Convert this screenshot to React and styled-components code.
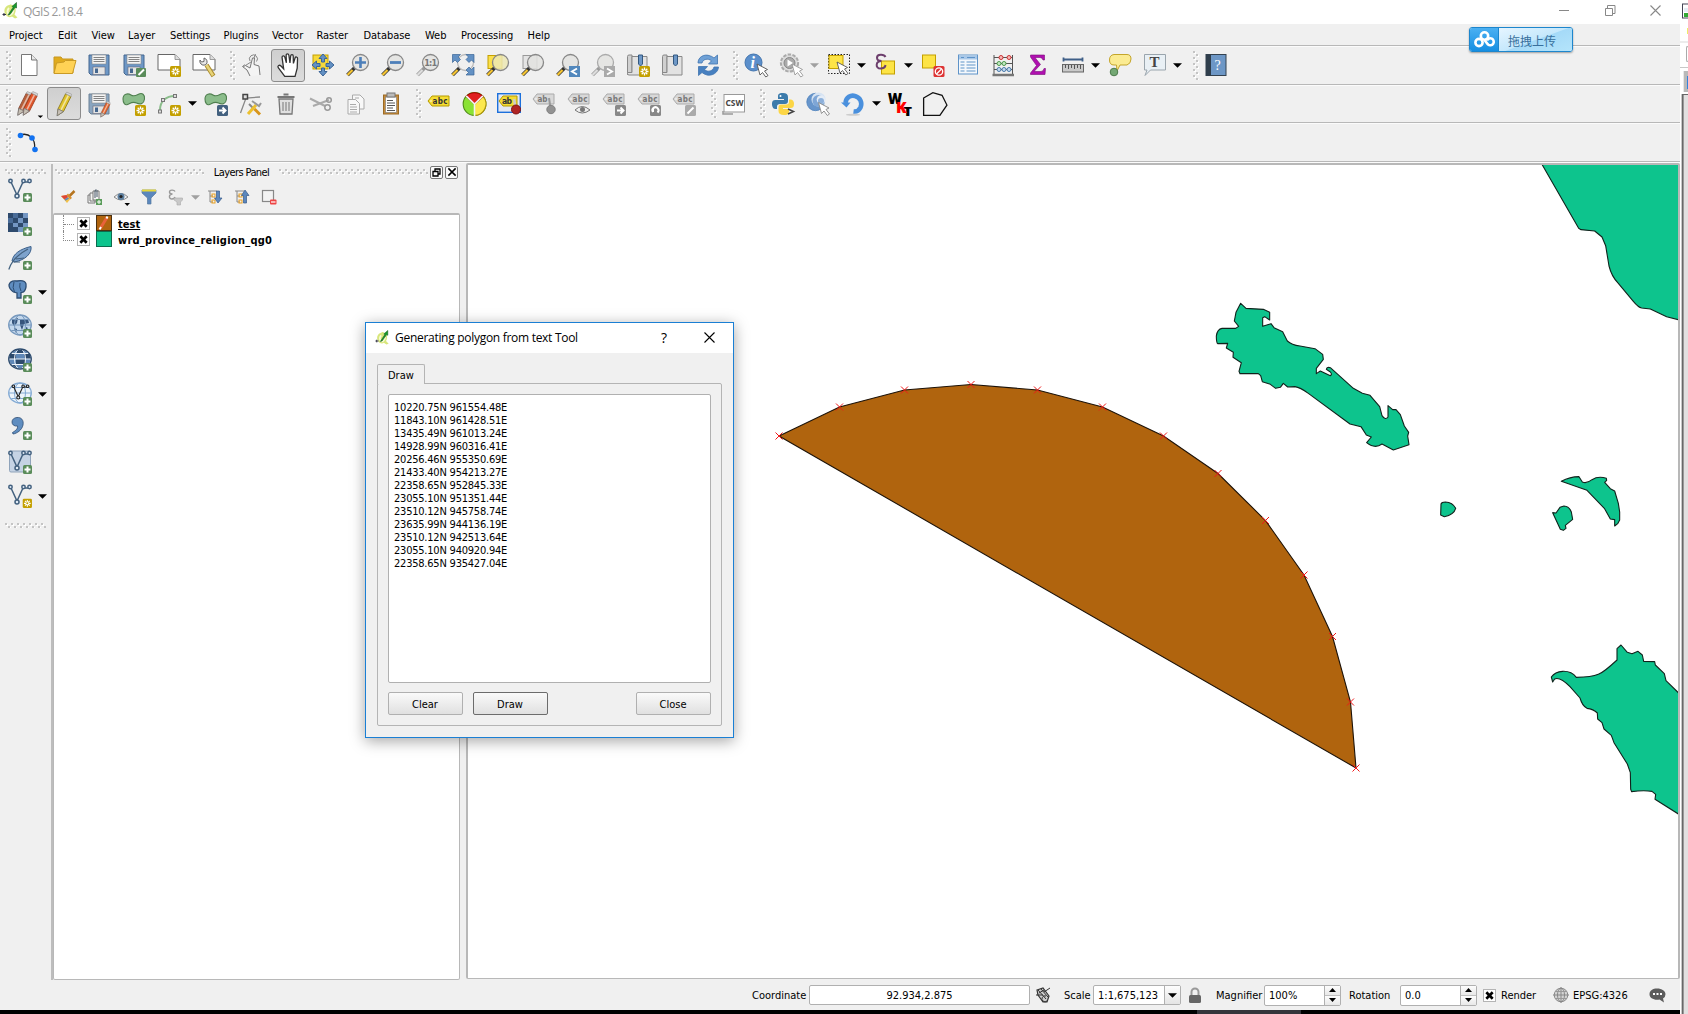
import React from "react";
import styled, { createGlobalStyle, css } from "styled-components";

const GlobalStyle = createGlobalStyle`
  * { box-sizing: border-box; }
  html, body { margin: 0; padding: 0; overflow: hidden; }
  body {
    font-family: "DejaVu Sans Condensed", "DejaVu Sans", "Noto Sans CJK SC", sans-serif;
    font-stretch: condensed;
    font-size: 11px;
    color: #000;
    background: #fff;
  }
  svg { display: block; flex: none; overflow: visible; }
`;

/* ---------- shared ---------- */

const dots = css`
  background-image:
    conic-gradient(at 2px 2px, transparent 75%, #c4c4c4 0),
    conic-gradient(at 2px 2px, transparent 75%, #c4c4c4 0),
    conic-gradient(at 2px 2px, transparent 75%, #fff 0),
    conic-gradient(at 2px 2px, transparent 75%, #fff 0);
  background-size: 6px 6px;
  background-position: 0 0, 3px 3px, 1px 1px, 4px 4px;
`;

const Screen = styled.div`
  position: relative;
  display: flex;
  width: 1688px;
  height: 1014px;
`;

const Main = styled.div`
  display: flex;
  flex-direction: column;
  width: 1680px;
  height: 1014px;
  background: #f0f0f0;
`;

/* ---------- title and menu ---------- */

const TitleBar = styled.header`
  display: flex;
  align-items: center;
  height: 24px;
  padding: 0 11px 2px 2px;
  background: #fff;
  color: #999;
  font-family: "Open Sans", "Noto Sans", sans-serif;
  font-stretch: normal;
  font-size: 12px;
  letter-spacing: -0.5px;
`;
const TitleText = styled.span`
  flex: 1;
  margin-left: 4px;
  padding-top: 2px;
`;
const WindowControls = styled.div`
  display: flex;
  align-items: center;
  gap: 34.500px;
  padding-right: 8px;
  margin-top: -1px;
`;
const MenuBar = styled.nav`
  display: flex;
  align-items: center;
  height: 21px;
  padding: 3px 0 0 9px;
`;
const MenuItem = styled.span`
  width: ${(p) => p.$w}px;
  white-space: nowrap;
  letter-spacing: -0.05px;
`;

/* ---------- toolbars ---------- */

const ToolBar = styled.div`
  display: flex;
  align-items: center;
  height: 39px;
  border-top: 1px solid #b8b8b8;
  box-shadow: inset 0 1px 0 #fbfbfb;
  padding-top: 1px;
`;
const Handle = styled.div`
  display: flex;
  flex: none;
  justify-content: flex-end;
  width: ${(p) => p.$w}px;
  &::after {
    content: "";
    width: 6px;
    height: 29px;
    ${dots}
  }
`;
const ToolButton = styled.div`
  display: flex;
  flex: none;
  align-items: center;
  justify-content: center;
  width: 34px;
  height: 33px;
  margin: 0 0.5px;
  border: 1px solid ${(p) => (p.$on ? "#8c8c8c" : "transparent")};
  border-radius: 3px;
  background: ${(p) => (p.$on ? "linear-gradient(#cfcfcf, #dcdcdc)" : "none")};
`;
const ArrowSlot = styled.div`
  display: flex;
  flex: none;
  align-items: center;
  justify-content: center;
  width: 12px;
`;
const Body = styled.div`
  display: flex;
  height: 819px;
  border-top: 1px solid #b8b8b8;
  box-shadow: inset 0 1px 0 #fbfbfb;
`;
const SideBar = styled.aside`
  display: flex;
  flex-direction: column;
  width: 53px;
  margin-top: 2px;
  padding: 5px 0 0 3px;
  border-right: 2px solid #bdbdbd;
`;
const SideDots = styled.div`
  width: 41px;
  height: 5px;
  margin: ${(p) => p.$m};
  ${dots}
`;
const SideRow = styled.div`
  display: flex;
  align-items: center;
  height: 34px;
`;
const SideIcon = styled.div`
  display: flex;
  justify-content: center;
  width: 33px;
`;

/* ---------- layers panel ---------- */

const Panel = styled.section`
  display: flex;
  flex-direction: column;
  width: 407px;
  padding-top: 3px;
`;
const PanelTitle = styled.div`
  display: flex;
  align-items: center;
  height: 14px;
  padding: 0 2px 0 2px;
`;
const PanelDots = styled.div`
  flex: none;
  width: ${(p) => p.$w}px;
  height: 6px;
  ${dots}
`;
const PanelName = styled.span`
  flex: 1;
  padding-top: 1px;
  text-align: center;
  letter-spacing: -0.6px;
  white-space: nowrap;
`;
const MiniButton = styled.div`
  display: flex;
  align-items: center;
  justify-content: center;
  width: 13px;
  height: 13px;
  margin-left: 2px;
  border: 1px solid #777;
  border-radius: 2px;
  background: #fafafa;
`;
const PanelTools = styled.div`
  display: flex;
  align-items: center;
  height: 34px;
  padding: 2px 0 0 1px;
`;
const PanelTool = styled.div`
  display: flex;
  justify-content: center;
  width: 27px;
`;
const Tree = styled.div`
  display: flex;
  flex-direction: column;
  height: 767px;
  padding-left: 9px;
  border: 1px solid #b8b8b8;
  border-width: 2px 1px 1px 1px;
  border-radius: 2px;
  background: #fff;
`;
const TreeRow = styled.div`
  display: flex;
  align-items: center;
  height: 16px;
  font-weight: bold;
  white-space: nowrap;
`;
const Branch = styled.div`
  width: 10px;
  height: 16px;
  margin-right: 4px;
  &::before {
    content: "";
    display: block;
    width: 10px;
    height: 9px;
    border-left: 1px dotted #888;
    border-bottom: 1px dotted #888;
  }
  &[data-open="true"] {
    border-left: 1px dotted #888;
  }
  &[data-open="true"]::before {
    border-left: 0;
  }
`;
const Swatch = styled.div`
  display: flex;
  align-items: center;
  justify-content: center;
  width: 16px;
  height: 16px;
  margin: 0 6px 0 6px;
  border: 1px solid ${(p) => p.$b};
  background: ${(p) => p.$c};
`;
const LayerName = styled.span`
  padding-top: 2px;
  text-decoration: ${(p) => (p.$active ? "underline" : "none")};
  letter-spacing: ${(p) => p.$ls}px;
`;
const Check = styled.div`
  display: flex;
  flex: none;
  align-items: center;
  justify-content: center;
  width: 13px;
  height: 13px;
  border: 1px solid #b4b4b4;
  background: #fff;
`;

/* ---------- map ---------- */

const MapFrame = styled.div`
  width: 1214px;
  height: 816px;
  margin: 1px 0 0 6px;
  border: 1px solid #b8b8b8;
  border-width: 2px 2px 1px 2px;
  border-radius: 2px;
  background: #fff;
  overflow: hidden;
`;

/* ---------- status bar ---------- */

const StatusBar = styled.footer`
  display: flex;
  align-items: center;
  height: 29px;
  padding: 1px 0 0 752px;
  white-space: nowrap;
`;
const Label = styled.span`
  width: ${(p) => p.$w}px;
  padding: 1px 0 0 ${(p) => p.$pl || 0}px;
`;
const Field = styled.div`
  display: flex;
  align-items: center;
  justify-content: ${(p) => (p.$center ? "center" : "flex-start")};
  width: ${(p) => p.$w}px;
  height: ${(p) => p.$h || 20}px;
  padding-left: ${(p) => p.$pl || 0}px;
  border: 1px solid #b0b0b0;
  border-radius: 2px;
  background: #fff;
`;
const FieldValue = styled.span`
  flex: ${(p) => (p.$grow ? 1 : "none")};
  padding-top: 1px;
`;
const ComboArrow = styled.div`
  display: flex;
  align-items: center;
  justify-content: center;
  width: 16px;
  height: 18px;
  border-left: 1px solid #b0b0b0;
  background: linear-gradient(#fdfdfd, #e4e4e4);
`;
const Spinner = styled.div`
  display: flex;
  flex-direction: column;
  width: 16px;
  height: 19px;
  border-left: 1px solid #b0b0b0;
`;
const SpinHalf = styled.div`
  display: flex;
  flex: 1;
  align-items: center;
  justify-content: center;
  background: linear-gradient(#fdfdfd, #e8e8e8);
  & + & { border-top: 1px solid #c0c0c0; }
`;
const StatusIcon = styled.div`
  display: flex;
  justify-content: center;
  width: ${(p) => p.$w}px;
`;
const TaskStrip = styled.div`
  display: flex;
  height: 5px;
  border-top: 1px solid #f0f0f0;
  background: #000;
`;
const TaskActive = styled.div`
  width: 104px;
  margin-left: 1197px;
  background: #35353b;
`;

/* ---------- neighbouring window edge ---------- */

const Edge = styled.div`
  display: flex;
  flex-direction: column;
  width: 8px;
  background: #fff;
  overflow: hidden;
`;
const EdgeTop = styled.div`
  height: 41px;
  padding: 3px 0 0 2px;
`;
const EdgeBar = styled.div`
  height: 27px;
  padding: 3px 0 0 6px;
  border-top: 2px solid #ececec;
  border-bottom: 1px solid #c8c8c8;
`;
const EdgeBox = styled.div`
  height: 16px;
  border: 1px solid #aaa;
  border-right: 0;
  border-radius: 2px 0 0 2px;
`;
const EdgeTab = styled.div`
  height: 21px;
  margin: 3px 0 2px 3px;
  padding: 5px 0 0 3px;
  border-left: 1px solid #e8e8e8;
  background: #b9b9b9;
`;
const EdgeBlue = styled.div`
  height: 13px;
  background: #3384dd;
`;
const EdgeBody = styled.div`
  flex: 1;
  margin-left: 1px;
  border-left: 1px solid #c8c8c8;
  box-shadow: inset 1px 0 0 #686868, inset 0 1px 0 #686868, inset 2px 0 0 #999;
  background: #e2e0e0;
`;

/* ---------- floating upload badge ---------- */

const Upload = styled.div`
  position: absolute;
  left: 1469px;
  top: 27px;
  display: flex;
  width: 104px;
  height: 25px;
  border: 1px solid #1d86cd;
  border-radius: 3px;
  box-shadow: 0 1px 2px rgba(0, 0, 0, 0.35);
  overflow: hidden;
`;
const UploadLogo = styled.div`
  display: flex;
  align-items: center;
  justify-content: center;
  width: 29px;
  border-right: 1px solid #1d86cd;
  background: linear-gradient(#4bb0f2, #168fe2);
`;
const UploadText = styled.div`
  flex: 1;
  padding: 4px 0 0 9px;
  color: #376f9c;
  font-family: "Noto Sans CJK SC", sans-serif;
  font-size: 12px;
  line-height: 17px;
  background: linear-gradient(160deg, #e6f5ff 0%, #c5e8fc 50%, #a5daf8 52%, #b4e4fb 100%);
`;

/* ---------- dialog ---------- */

const Dialog = styled.div`
  position: absolute;
  left: 365px;
  top: 322px;
  display: flex;
  flex-direction: column;
  width: 369px;
  height: 416px;
  border: 1px solid #1a7fd4;
  background: #f0f0f0;
  box-shadow: 0 3px 14px rgba(0, 0, 0, 0.36);
`;
const DialogTitle = styled.div`
  display: flex;
  align-items: center;
  height: 30px;
  padding: 0 18px 1px 9px;
  background: #fff;
  font-family: "Open Sans", "Noto Sans", sans-serif;
  font-stretch: normal;
  font-size: 12px;
`;
const DialogName = styled.span`
  flex: 1;
  margin-left: 5px;
  letter-spacing: -0.29px;
  white-space: nowrap;
`;
const HelpMark = styled.span`
  width: 43px;
  font-size: 14px;
`;
const TabRow = styled.div`
  display: flex;
  padding: 11px 0 0 11px;
`;
const Tab = styled.div`
  width: 48px;
  height: 20px;
  padding: 4px 0 0 10px;
  margin-bottom: -1px;
  border: 1px solid #b4b4b4;
  border-bottom: 0;
  border-radius: 2px 2px 0 0;
  background: #f0f0f0;
  z-index: 1;
`;
const TabPage = styled.div`
  display: flex;
  flex-direction: column;
  width: 345px;
  height: 343px;
  margin-left: 11px;
  padding: 10px;
  border: 1px solid #b4b4b4;
  border-radius: 2px;
`;
const TextArea = styled.div`
  height: 289px;
  padding: 6px 5px;
  border: 1px solid #b0b0b0;
  border-radius: 2px;
  background: #fff;
`;
const TextLine = styled.div`
  height: 13px;
  line-height: 13px;
  letter-spacing: -0.22px;
  white-space: pre;
`;
const ButtonRow = styled.div`
  display: flex;
  gap: 10px;
  margin-top: 9px;
`;
const PushButton = styled.div`
  width: 75px;
  height: 23px;
  margin-left: ${(p) => (p.$right ? "auto" : 0)};
  padding-right: 1px;
  border: 1px solid ${(p) => (p.$default ? "#6c6c6c" : "#b0b0b0")};
  border-radius: 2px;
  background: linear-gradient(#fafafa, #e0e0e0);
  line-height: 23px;
  text-align: center;
`;

/* ---------- icons ---------- */

const Svg = ({ s = 24, w, h, vb, children }) => (
  <svg width={w || s} height={h || s} viewBox={vb || "0 0 24 24"} fill="none">{children}</svg>
);
const Down = ({ c = "#000" }) => (
  <svg width="9" height="5" viewBox="0 0 10 5"><path d="M0 0H10L5 5Z" fill={c} /></svg>
);
const Star = () => (
  <g><rect x="13" y="13" width="11" height="11" rx="1.5" fill="#c4a000" />
    <path d="M18.500 14.500v8M14.500 18.500h8M15.700 15.700l5.600 5.600M21.300 15.700l-5.600 5.600" stroke="#fff" strokeWidth="1.300" /><circle cx="18.500" cy="18.500" r="1.200" fill="#c4a000" /></g>
);
const Plus = () => (
  <g><rect x="15" y="15" width="9" height="9" rx="1.500" fill="#5a8c5a" /><path d="M19.500 16.500v6M16.500 19.500h6" stroke="#fff" strokeWidth="2" /></g>
);
const Cursor = ({ x = 0, y = 0, c = "#555" }) => (
  <path transform={`translate(${x} ${y})`} d="M0 0L3 11L5.500 8.500L8.800 13L11 11.500L7.500 7L10.500 5.500Z" fill="#fff" stroke={c} strokeWidth=".9" />
);
const Floppy = ({ pale, children }) => (
  <Svg><path d="M2 2H22V22H4L2 20Z" fill={pale ? "#8aa5c0" : "#6d97c6"} stroke={pale ? "#6c8296" : "#45678f"} /><rect x="5" y="2" width="14" height="9" fill="#f4f4f4" stroke="#888" strokeWidth=".6" /><path d="M6.500 4.500h11M6.500 6.500h11M6.500 8.500h11" stroke="#777" strokeWidth=".9" /><rect x="6" y="14" width="12" height="7.500" fill="#e4e4e4" stroke="#667" strokeWidth=".6" /><rect x="8" y="15.500" width="3" height="4.500" fill="#45678f" />{children}</Svg>
);
const Lens = ({ c = "#888", fill = "#e3e3e1", gold = true, before, children }) => (
  <Svg>{before}<path d="M1.500 22L8.500 15" stroke={gold ? "#333" : "#999"} strokeWidth="3.800" /><path d="M1.500 22L6.500 17" stroke={gold ? "#f5c431" : "#ddd"} strokeWidth="2.300" /><circle cx="14.500" cy="9.500" r="8" fill={fill} fillOpacity=".85" stroke={c} strokeWidth="1.300" />{children}</Svg>
);
const Tag = ({ on, cut, children }) => (
  <Svg><g transform={on ? "translate(0 2)" : undefined}><path d="M1 7L5 2H22V12H5Z" fill={on ? "#f5dc33" : "#d8d8d8"} stroke={on ? "#b59b00" : "#aaa"} /><circle cx="4" cy="7" r=".8" fill="#fff" />
    <text x="5.500" y="10.300" fontSize="8" fontWeight="bold" fill={on ? "#333" : "#777"} fontFamily="DejaVu Sans, sans-serif" textLength={cut ? 10 : 15}>{cut ? "ab" : "abc"}</text></g>{children}</Svg>
);
const Cloud = ({ children }) => (
  <Svg><path d="M1 7C1 1.500 6 1 9 3S14 3.500 17 2S23 2.500 22.500 7S18.500 13 14.500 11S8 11.500 5.500 12.500S1 11 1 7Z" fill="#8bbd8b" stroke="#4f7f4f" strokeWidth="1.100" />{children}</Svg>
);
const Nodes = ({ c = "#43617f" }) => (
  <g stroke={c} strokeWidth="1.500" fill="#dfeaf5"><path d="M3 4L9 17L15 4H21" fill="none" /><circle cx="2.500" cy="3" r="1.700" /><circle cx="9" cy="18" r="2" /><circle cx="15.500" cy="3" r="1.700" /><circle cx="21.500" cy="3" r="1.700" /></g>
);
const Book = ({ children }) => (
  <Svg><path d="M1.500 3.500Q1.500 2 3 2H6V20H3Q1.500 20 1.500 22Z" fill="#d0d0d0" stroke="#888" /><path d="M6 3.500H21V22H3Q1.500 22 1.500 20.500T3 19.500H6Z" fill="#e2e2e2" stroke="#888" /><path d="M12.500 2H16.500V11L14.500 13L12.500 11Z" fill="#6d97c6" stroke="#335880" />{children}</Svg>
);
const Sheet = ({ children }) => (
  <Svg><path d="M1 1.500H18L23 6.500V17H1Z" fill="#fff" stroke="#666" /><path d="M18 1.500V6.500H23" fill="#ddd" stroke="#888" strokeWidth=".8" />{children}</Svg>
);
const Pencil = ({ x = 0, y = 0, k = 1, c = "#dfc32c", dark = "#8f7a12" }) => (
  <g transform={`translate(${x} ${y}) scale(${k})`}><path d="M6 16L13 2L18 4.500L11 18.500L5.500 22Z" fill={c} stroke={dark} strokeWidth=".8" /><path d="M8.500 17.500L15.500 3.500" stroke="#fff" strokeOpacity=".55" strokeWidth="1.500" /><path d="M6 16L5 22.500L11 18.500Z" fill="#c8c0b4" stroke="#777" strokeWidth=".8" /><path d="M13 2L14 .5L18.500 2.500L18 4.500Z" fill="#d8d8d8" stroke="#999" strokeWidth=".6" /></g>
);
const Badge = ({ d, fill = "#888" }) => (
  <g><rect x="13" y="13" width="11" height="11" rx="1.500" fill={fill} /><path d={d} stroke="#fff" strokeWidth="2" fill="none" /></g>
);
const Globe = ({ c = "#54779f", fill = "#c3d7ec", children, land }) => (
  <Svg><ellipse cx="12" cy="11" rx="11.300" ry="10" fill={fill} stroke={c} strokeWidth="1.300" />{land}<path d="M1 11H23M3.500 5.500H20.500M3.500 16.500H20.500" stroke={c} strokeWidth="1" /><ellipse cx="12" cy="11" rx="5.500" ry="10" stroke={c} />{children}</Svg>
);
const QLogo = ({ s = 17 }) => (
  <Svg s={s} vb="0 0 17 17"><path d="M7 3C3 4 1.500 8 3 11.500S8 16 10 14.500L13 16.500L15.500 15.500L12.500 12.500C14.500 9 14 5 11 3.300S8 2.800 7 3Z" fill="#d8e67c" /><path d="M7 6C5 8 5 11 7 12.500S11 11 11.500 8" stroke="#f7fbd4" strokeWidth="2" /><path d="M6 13L11 5.500L10 4.500L14.500 .5V6L13 5.500L8 12.500Z" fill="#159a2a" stroke="#1c5a22" strokeWidth=".6" /><path d="M2 11V14M.5 12.500H4" stroke="#334" strokeWidth="1.100" /></Svg>
);
const X = ({ s = 11, c = "#999", w = 1.1 }) => (
  <svg width={s} height={s} viewBox="0 0 11 11"><path d="M.5 .5L10.500 10.500M10.500 .5L.5 10.500" stroke={c} strokeWidth={w} fill="none" /></svg>
);
const CheckX = () => <X s={7} c="#000" w={4.2} />;

const blueBit = "#6391c4";
const icons = {
  blank: <Svg><path d="M4.500 1.500H14.500L20 7V22.500H4.500Z" fill="#fff" stroke="#777" /><path d="M14.500 1.500V7H20" fill="#e8e8e8" stroke="#777" /></Svg>,
  open: <Svg><path d="M2 4H9L10.500 6H21V20H2Z" fill="#e0ab1d" stroke="#c79720" /><path d="M4.500 10L12 9L13.500 7.500H24L20.500 20.500H2Z" fill="#ffd255" stroke="#c99a25" /></Svg>,
  save: <Floppy />,
  saveAs: <Floppy><rect x="14" y="15" width="10" height="9" rx="1" fill="#5a8c5a" /><path d="M16.500 22L22 16.500" stroke="#fff" strokeWidth="2" /></Floppy>,
  composer: <Sheet><Star /></Sheet>,
  manager: <Sheet><path d="M14.500 12L21.500 23" stroke="#a98a2c" strokeWidth="4.500" /><path d="M14.500 12L21 22.500" stroke="#e8d478" strokeWidth="2.500" /><path d="M8 7A4 4 0 0 0 13 12L14.500 11A4 4 0 0 0 12 5L12 8.500L9.500 9Z" fill="#e8e8e8" stroke="#666" /></Sheet>,
  touch: <Svg><path d="M9 23L6 17L1.500 13.500L3.500 12L9 15L11.500 5L13.500 5L13 11.500L18 13L19 22" fill="#f4f4f4" stroke="#777" /><path d="M9 8A4 4 0 1 1 15.500 8.500M13 5L14.500 1M2 14L10 9" stroke="#888" strokeWidth="1" /></Svg>,
  hand: <Svg s={26} vb="0 0 24 24"><path d="M9 22.500L3 14.500C2 12.500 4 11.500 5.500 13L8 15.500L6.500 5C6.400 3.300 8.500 3 9 4.500L10.500 10L10.300 3C10.300 1.300 12.500 1.300 12.800 3L13.800 10L14.500 3.500C14.700 2 16.800 2.200 16.800 3.700L17 10.500L18.500 5.500C19 4 21 4.500 20.800 6L20.500 15L18.500 22.500Z" fill="#fff" stroke="#333" strokeWidth="1.200" /></Svg>,
  panSel: <Svg><rect x="2" y="2" width="15" height="14" fill="#f7d93a" stroke="#c4a000" /><path d="M12 1L16 5.500H13.500V9H10.500V5.500H8ZM12 23L16 18.500H13.500V15H10.500V18.500H8ZM1 12L5.500 8V10.500H9V13.500H5.500V16ZM23 12L18.500 8V10.500H15V13.500H18.500V16Z" fill={blueBit} stroke="#3b6597" /></Svg>,
  zoomIn: <Lens><path d="M14.500 4V15M9 9.500H20" stroke="#4d7fb9" strokeWidth="2.600" /></Lens>,
  zoomOut: <Lens><path d="M9 9.500H20" stroke="#4d7fb9" strokeWidth="2.800" /></Lens>,
  zoomOne: <Lens gold={false}><text x="8.200" y="13" fontSize="9" fontWeight="bold" fill="#777" fontFamily="DejaVu Sans, sans-serif" textLength="13">1:1</text></Lens>,
  zoomFull: <Lens c="#bbb" fill="#eee"><path d="M1.500 1.500H9.500L7 4L9.500 6.500L6.500 9.500L4 7L1.500 9.500ZM23 1.500H15L17.500 4L15 6.500L18 9.500L20.500 7L23 9.500ZM23 22H15L17.500 19.500L15 17L18 14L20.500 16.500L23 14Z" fill={blueBit} stroke="#3b6597" strokeWidth=".7" /></Lens>,
  zoomSel: <Lens fill="#ece7b4" before={<rect x="2" y="2.500" width="14" height="13" fill="#fbe04b" stroke="#c4a000" />} />,
  zoomLayer: <Lens before={<rect x="2" y="2.500" width="14" height="13" fill="#e4e4e4" stroke="#999" />} />,
  zoomLast: <Lens><rect x="13" y="13" width="11" height="11" fill="#5288bd" /><path d="M21 15.500L16 18.500L21 21.500" stroke="#fff" strokeWidth="1.900" /></Lens>,
  zoomNext: <Lens gold={false} c="#aaa"><rect x="13" y="13" width="11" height="11" fill="#aaa" /><path d="M16 15.500L21 18.500L16 21.500" stroke="#fff" strokeWidth="1.900" /></Lens>,
  bookNew: <Book><Star /></Book>,
  book: <Book />,
  refresh: <Svg><path d="M2 10C2 4 8 1 13 2.500Q16 3.200 18 5L21.500 2V11H12.500L15.500 7.800C12 5 7 6 6 10Z" fill="#6fa1d6" stroke="#3f74b0" strokeWidth=".8" /><path d="M22.500 14C22 20 16 23 11 22Q8 21.200 6 19.500L2.500 22.500V13.500H11.500L8.500 16.800C12 19.500 17 18 18 14Z" fill="#4780c0" stroke="#3f74b0" strokeWidth=".8" /></Svg>,
  info: <Svg><circle cx="9.500" cy="9.500" r="8.500" fill="#5b8fcb" stroke="#4274ae" /><text x="6.500" y="15" fontSize="16" fontStyle="italic" fontWeight="bold" fill="#fff" fontFamily="Liberation Serif, serif">i</text><Cursor x={13} y={11} /></Svg>,
  action: <Svg><circle cx="10.500" cy="10" r="8.600" fill="#ddd" stroke="#aaa" strokeWidth="2" strokeDasharray="3.500 1.300" /><circle cx="10.500" cy="10" r="5.500" fill="#aaa" stroke="#888" /><path d="M8.500 6.500L14 10L8.500 13.500Z" fill="#fff" /><Cursor x={13} y={11} c="#999" /></Svg>,
  select: <Svg><g transform="translate(1 0)"><rect x="1.500" y="1.500" width="21" height="19" stroke="#222" strokeDasharray="1.500 1.500" /><rect x="2" y="2.500" width="14" height="13" fill="#fde446" stroke="#c4a000" /><Cursor x={10} y={9} /></g></Svg>,
  eps: <Svg><g transform="translate(1.500 0)"><rect x="7" y="8" width="13" height="13" fill="#fde446" stroke="#c4a000" /><path d="M11 4C9.500 1 2.500 1 2.500 4.800Q2.500 8 7 8M7 8C1 8 .5 15.500 6 15.500Q10.500 15.500 11 12" stroke="#6d3f6d" strokeWidth="2" /></g></Svg>,
  deselect: <Svg><g transform="translate(1.500 0)"><rect x="1" y="2" width="13" height="13" fill="#fde446" stroke="#c4a000" /><rect x="12" y="13" width="11" height="11" rx="1.500" fill="#d33" /><circle cx="17.500" cy="18.500" r="3.700" stroke="#fff" strokeWidth="1.300" /><path d="M15 21L20 16" stroke="#fff" strokeWidth="1.300" /></g></Svg>,
  table: <Svg><g transform="translate(1 0)"><rect x="2.500" y="2" width="19" height="19" fill="#f4f8fc" stroke="#5e93c8" /><rect x="3" y="2.500" width="18" height="4" fill="#a9c8e8" /><path d="M4.500 9h4M10.500 9h9M4.500 12h4M10.500 12h9M4.500 15h4M10.500 15h9M4.500 18h4M10.500 18h9M5 4.500h3M11 4.500h8" stroke="#5e93c8" strokeWidth="1.100" /></g></Svg>,
  abacus: <Svg><g transform="translate(1 0)"><path d="M3 2V22M21.500 2V22M3 4.500H21.500M3 10.500H21.500M3 16.500H21.500" stroke="#555" /><path d="M1.500 22H23" stroke="#777" strokeWidth="2.500" /><g fill="#f6b8b8" stroke="#c33"><circle cx="10" cy="4.500" r="2" /><circle cx="18" cy="4.500" r="2" /></g><g fill="#c3e8c3" stroke="#4a9a4a"><circle cx="8" cy="10.500" r="2" /><circle cx="13" cy="10.500" r="2" /></g><g fill="#c3daf0" stroke="#4a7aaa"><circle cx="8" cy="16.500" r="2" /><circle cx="13" cy="16.500" r="2" /><circle cx="18" cy="16.500" r="2" /></g></g></Svg>,
  sigma: <Svg><path d="M5.500 2H19.500V7H18Q17.500 4.500 15 4.500H10L15.500 11.500L9 18.500H16Q18.500 18.500 19 15.500H20.500L20 21.500H5.500V20L11.500 12.500L5.500 4Z" fill="#b010b0" stroke="#7a0a7a" strokeWidth=".6" /></Svg>,
  measure: <Svg><g transform="translate(1 0)"><path d="M2.500 6.500H21.500M2.500 4.500V8.500M21.500 4.500V8.500" stroke="#3f5f88" strokeWidth="1.800" /><rect x="1.500" y="11.500" width="21" height="7.500" fill="#c9c9c9" stroke="#666" /><path d="M4.500 12v3M7.500 12v4M10.500 12v3M13.500 12v4M16.500 12v3M19.500 12v4" stroke="#555" /></g></Svg>,
  tip: <Svg><g transform="translate(1 0)"><path d="M6 1.500H19Q23 1.500 23 6T19 12H12L9 18L8.500 12H6Q1.500 12 1.500 7T6 1.500Z" fill="#fbeb92" stroke="#c4a52a" /><circle cx="6" cy="19" r="3.800" fill="#74a874" stroke="#4c7b4c" /></g></Svg>,
  text: <Svg><g transform="translate(1 0)"><path d="M1.500 1.500H22.500V17H7.500L2 22.500L4 17H1.500Z" fill="#e9f0f5" stroke="#9aa5ad" /><text x="6.500" y="14" fontSize="15" fontWeight="bold" fill="#444" fontFamily="Liberation Serif, serif">T</text></g></Svg>,
  help: <Svg><rect x="2" y="1.500" width="20" height="21" fill="#6d97c6" stroke="#33414f" /><rect x="2" y="1.500" width="5" height="21" fill="#2f3e4c" /><text x="10.500" y="17" fontSize="14" fill="#fff" fontFamily="Liberation Serif, serif">?</text></Svg>,

  pencils: <Svg s={26} vb="0 0 24 24"><Pencil x={-3.5} y={0} c="#b9603a" dark="#8a4a35" /><Pencil x={1.5} y={0} c="#e0562a" dark="#9c3e20" /><path d="M20 22.500H25L22.500 25Z" fill="#000" /></Svg>,
  pencil: <Svg s={26} vb="0 0 24 24"><Pencil x={0.5} y={0.5} /></Svg>,
  saveEdit: <Floppy pale><Pencil x={10} y={9} k={0.72} c="#e56a32" dark="#9c3e20" /></Floppy>,
  cloudNew: <Cloud><Star /></Cloud>,
  arc: <Svg><path d="M3 18C3 9 9 4 18 4" stroke="#8bbd8b" strokeWidth="2" /><g fill="#ddd" stroke="#777"><rect x="1.500" y="18" width="3" height="3" /><rect x="4.500" y="6.500" width="3" height="3" /><rect x="16.500" y="2.500" width="3" height="3" /></g><Star /></Svg>,
  cloudMove: <Cloud><Badge fill="#43617f" d="M15 18.500H21.500M18.500 15.500L21.500 18.500L18.500 21.500" /></Cloud>,
  node: <Svg><path d="M1.500 21L7 6L21 5" stroke="#888" strokeWidth="1.300" /><rect x="4" y="2.500" width="4.500" height="4.500" stroke="#444" strokeWidth="1.500" fill="#ddd" /><path d="M10 12L14 16" stroke="#888" strokeWidth="2" /><path d="M9 22L17 13" stroke="#ecc02e" strokeWidth="3" /><path d="M13 9L20 14L22 11" stroke="#999" strokeWidth="2" /><path d="M15.500 17L21 22.500" stroke="#d8961c" strokeWidth="3" /></Svg>,
  trash: <Svg><path d="M5 7H19L18 22H6Z" fill="#e0e0e0" stroke="#777" strokeWidth="1.300" /><path d="M3.500 5H20.500M9.500 2.500H14.500" stroke="#777" strokeWidth="2" /><path d="M9 10V19M12 10V19M15 10V19" stroke="#888" strokeWidth="1.200" /></Svg>,
  cut: <Svg><path d="M1 6.500L16 14M4 14L20 8" stroke="#aaa" strokeWidth="2" /><circle cx="20" cy="8" r="2.300" stroke="#999" strokeWidth="1.500" /><circle cx="18.500" cy="15.500" r="2.700" stroke="#999" strokeWidth="1.500" /></Svg>,
  copy: <Svg><g fill="#f8f8f8" stroke="#aaa"><path d="M8.500 3H16L20 7V17H8.500Z" /><path d="M4 7.500H11.500L15.500 11.500V22H4Z" /></g><path d="M6 12.500h6M6 15h7M6 17.500h7M6 20h7M11 6h4" stroke="#aaa" /></Svg>,
  paste: <Svg><rect x="4.500" y="3" width="15" height="19" fill="#c68c3c" stroke="#9b6a24" /><rect x="6.500" y="5" width="11" height="15.500" fill="#fff" stroke="#777" strokeWidth=".6" /><rect x="8" y="1" width="8" height="4" fill="#bbb" stroke="#777" /><path d="M8 8.500h6M8 11h8M8 13.500h8M8 16h6M8 18.500h8" stroke="#555" /></Svg>,
  label: <Tag on />,
  pie: <Svg s={26} vb="0 0 24 24"><circle cx="12.500" cy="12" r="10.500" fill="#8ae234" stroke="#4c8a12" /><path d="M12.500 12V22.500A10.500 10.500 0 0 0 20.500 5.200Z" fill="#fce94f" stroke="#b0930a" /><path d="M12.500 12L4.800 5A10.500 10.500 0 0 1 20.200 5Z" fill="#e02020" stroke="#a00" /><path d="M12.500 23V12L4.800 4.500M12.500 12L20.200 4.500" stroke="#f4f4f4" strokeWidth="1.500" /></Svg>,
  pinOn: <Svg><rect x=".7" y="1.700" width="22.600" height="18.600" fill="#e4e8f2" stroke="#1c70dc" strokeWidth="1.400" /><path d="M2 9L6 4H20V14H6Z" fill="#f5dc33" stroke="#b59b00" /><text x="5" y="12" fontSize="8.500" fontWeight="bold" fill="#333" fontFamily="DejaVu Sans, sans-serif" textLength="10">ab</text><path d="M17 7L18.500 16" stroke="#ccc" strokeWidth="2.500" /><circle cx="19" cy="17.500" r="4.500" fill="#b02424" stroke="#801414" /></Svg>,
  pin: <Tag cut><path d="M17 6L18.500 16" stroke="#999" strokeWidth="2" /><circle cx="19" cy="17.500" r="4.200" fill="#929292" stroke="#808080" /></Tag>,
  tagEye: <Tag><path d="M8 18Q15 11 23 18Q15 24 8 18Z" fill="#eee" stroke="#777" /><circle cx="15.500" cy="17.500" r="2.500" fill="#777" /></Tag>,
  tagMove: <Tag><Badge d="M15 18.500H21.500M18.500 15.500L21.500 18.500L18.500 21.500" /></Tag>,
  tagTurn: <Tag><Badge d="M16 20A3 3 0 1 1 20.500 20.500M16 16V20" /></Tag>,
  tagEdit: <Tag><Badge fill="#aaa" d="M15.500 21.500L21.500 15.500" /></Tag>,
  csw: <Svg><path d="M1 19V22H11" stroke="#999" strokeWidth="1.500" /><rect x="2" y="2.500" width="20.500" height="17.500" fill="#fff" stroke="#999" /><text x="3.500" y="14" fontSize="8.500" fontWeight="bold" fill="#444" fontFamily="Noto Sans, sans-serif" textLength="18" lengthAdjust="spacingAndGlyphs">CSW</text></Svg>,
  python: <Svg><path d="M12 1C7 1 7 3 7 5V7H13V8H4C1 8 1 11 1 12.500S2 17 4 17H6V14.500Q6 12 9 12H14Q17 12 17 9V5Q17 1 12 1Z" fill="#3c7bab" /><path d="M13 23C18 23 18 21 18 19V17H12V16H20C23 16 23 13 23 11.500S22 7.500 20 7.500H18V10Q18 12.500 15 12.500H10Q7.500 12.500 7.500 15.500V19Q7.500 23 13 23Z" fill="#fcd646" /><circle cx="9.500" cy="4" r="1" fill="#fff" /><path d="M17 17L22.500 19.500L17 22" stroke="#444" strokeWidth="1.500" /></Svg>,
  crescent: <Svg><circle cx="9.500" cy="10" r="8.700" fill="#6795cb" stroke="#4f83bd" strokeWidth=".8" /><circle cx="12.500" cy="7.500" r="7" fill="#d6e3f2" /><circle cx="12.500" cy="9" r="6" fill="#7ea6d6" /><circle cx="15" cy="7.500" r="4.300" fill="#e4ecf6" /><circle cx="15" cy="9" r="3" fill="#8db0da" /><Cursor x={12.500} y={10.500} c="#888" /></Svg>,
  undo: <Svg><path d="M4.500 11C5 5 10 2.700 14 4C19.500 5.500 21.500 11 19.500 15.500C18 18.500 15 19.800 12.500 19.500" stroke="#4a90dd" strokeWidth="4.600" /><path d="M0 10.500H9.500L5.500 15.500Z" fill="#4a90dd" /><ellipse cx="12" cy="22.800" rx="7" ry="1" fill="#aaa" opacity=".5" /></Svg>,
  wkt: <Svg><g fontFamily="Open Sans, sans-serif" fontWeight="800"><text x="0" y="11.500" fontSize="15" fill="#000" textLength="14" lengthAdjust="spacingAndGlyphs">W</text><text x="15.500" y="23.500" fontSize="13" fill="#000" textLength="8.500" lengthAdjust="spacingAndGlyphs">T</text><text x="8" y="20.500" fontSize="15.500" fill="#f00" textLength="10.500" lengthAdjust="spacingAndGlyphs">K</text></g></Svg>,
  poly: <Svg s={26} vb="0 0 24 24"><path d="M1.500 6.500L10 1.500L18.500 4L23 13L16.500 22.500H1.500Z" stroke="#111" strokeWidth="1.200" /></Svg>,
  curve: <Svg><path d="M3 4C12 1 19 8 17.500 18" stroke="#222" strokeWidth="1.300" /><g fill="#1272f0"><circle cx="3.500" cy="4.500" r="2.800" /><circle cx="15" cy="7" r="2.800" /><circle cx="18" cy="18.500" r="2.800" /></g></Svg>,

  vAdd: <Svg><Nodes /><Plus /></Svg>,
  vNew: <Svg><Nodes /><g transform="translate(3.800 3.800) scale(.84)"><Star /></g></Svg>,
  raster: <Svg><rect x="0" y="1" width="20" height="19" fill="#7396c3" /><path d="M0 1H5V6H0ZM10 1H15V6H10ZM15 6H20V11H15ZM5 6H10V11H5ZM0 11H5V15H0ZM5 15H10V20H5ZM10 11H15V15H10ZM0 15H5V20H0Z" fill="#2e4a6d" /><path d="M5 1H10V6H5ZM0 6H5V11H0Z" fill="#4a6c98" /><Plus /></Svg>,
  feather: <Svg><path d="M4 15C5 8 12 3 23 .5C24 7 18 14 6 16Z" fill="#7da2cc" stroke="#3b5f8a" /><path d="M.8 23.500C3 16 9 9 20 3M8 13L16 12M6 16L12 16" stroke="#43617f" strokeWidth="1.200" /><Plus /></Svg>,
  elephant: <Svg><path d="M1 5Q2 0 9 1Q17-.5 18 4Q18.500 9 15.500 12L13 12.500V18H9V13L5.500 12Q1 9 1 5Z" fill="#5f8dc0" stroke="#2d4d73" strokeWidth="1.300" /><path d="M6 2Q4 8 6.500 12M12 3Q11 7 13 11" stroke="#2d4d73" /><Plus /></Svg>,
  world: <Globe land={<path d="M4 6L10 4L9 9L6 12L4 9ZM12 5L20 5L21 9L16 10L14 16L12 11ZM6 14L9 15L8 19ZM18 13L20 14L18 16Z" fill="#37557c" />} c="#7698bd"><Plus /></Globe>,
  wcs: <Globe fill="#5f88b8" c="#eef4fa" land={<path d="M2 6H8V11H1ZM16 6H22L23 11H17ZM8 1.500H16L15 5H9ZM3 16.500H8L9 20ZM8 11H17V16H8Z" fill="#2d4a6c" />}><ellipse cx="12" cy="11" rx="11.300" ry="10" stroke="#2d4a6c" strokeWidth="1.300" /><Plus /></Globe>,
  wfs: <Globe fill="#edf4fb" c="#83aad4"><g transform="translate(3.500 2) scale(.75)"><Nodes c="#222" /></g><Plus /></Globe>,
  comma: <Svg><path d="M9 1.500C13 1 16 4 15 9C14 14 9 17.500 5 18L4.500 16.500C8 14.500 10 12.500 9.500 10C6 10.500 4 8.500 4 6C4 3.500 6 1.700 9 1.500Z" fill="#5f8dc0" stroke="#2d4d73" strokeWidth=".8" /><Plus /></Svg>,
  virtual: <Svg><rect x="1.500" y="1" width="21" height="21" rx="1.500" fill="#c5d3e4" stroke="#8fa3ba" /><Nodes /><Plus /></Svg>,

  brush: <Svg s={16} vb="0 0 16 16"><path d="M9.500 7L14.500 2" stroke="#b5741f" strokeWidth="2.500" /><path d="M8 4.500L12 9L10 10.500L6.500 6Z" fill="#d98e2b" /><path d="M1 7L6.500 6L10 10.500L7 14Z" fill="#f2c14a" /><path d="M1 7L6.500 6L8 8L4.500 10.500Z" fill="#dd4438" /><path d="M5 11L8.500 9" stroke="#5b87bd" strokeWidth="1.500" /></Svg>,
  group: <Svg s={16} vb="0 0 16 16"><g stroke="#777" fill="#f4f4f4"><path d="M1 6H8V14H1Z" /><path d="M3 4H10V12H3Z" /><path d="M6 2H12V11H6Z" /></g><path d="M8 9V1.500Q9.500 0 10 1.500V8" stroke="#456" /><rect x="9" y="10" width="6" height="6" fill="#5a9c5a" /><path d="M12 11V15M10 13H14" stroke="#fff" /></Svg>,
  eye: <Svg s={17} vb="0 0 17 17"><path d="M1 8Q8 1 15 8Q8 14 1 8Z" fill="#f2f2f2" stroke="#888" /><circle cx="8" cy="7.500" r="3.500" fill="#5d7f9f" /><circle cx="8" cy="7.500" r="1.600" fill="#222" /><path d="M11.500 14H17L14.200 17Z" fill="#000" /></Svg>,
  filter: <Svg s={16} vb="0 0 16 16"><path d="M1 1H15V4L10 9V15H6.500V9L1 4Z" fill="#5b87bd" stroke="#54789f" strokeWidth=".7" /><path d="M1 1.500H15" stroke="#e8d83a" strokeWidth="2" /></Svg>,
  epsSmall: <Svg s={17} vb="0 0 17 17"><path d="M8 2.500C7 .5 2.500 .7 2.500 3Q2.500 5 5.500 5C1.500 5 1.500 10 5 10Q7.500 10 8 8" stroke="#999" strokeWidth="1.400" /><path d="M7 9H15.500V11L13.500 13V16H10V13L7 11Z" fill="#c8c8c8" stroke="#aaa" strokeWidth=".6" /></Svg>,
  expand: <Svg s={16} vb="0 0 16 16"><path d="M1 2H10M3 2V13H6M3 7H6" stroke="#888" /><rect x="5" y="5" width="3" height="3" stroke="#e9a020" /><rect x="5" y="11" width="3" height="3" stroke="#e9a020" /><path d="M9.500 2H12.500V9H15L11 14L7.500 9H9.500Z" fill="#5b87bd" stroke="#36598a" strokeWidth=".7" /></Svg>,
  collapse: <Svg s={16} vb="0 0 16 16"><path d="M1 2H10M3 2V13H6M3 7H6" stroke="#888" /><rect x="5" y="5" width="3" height="3" stroke="#e9a020" /><rect x="5" y="11" width="3" height="3" stroke="#e9a020" /><path d="M9.500 14H12.500V6.500H15L11 1L7.500 6.500H9.500Z" fill="#5b87bd" stroke="#36598a" strokeWidth=".7" /></Svg>,
  remove: <Svg s={16} vb="0 0 16 16"><rect x="1.500" y="1.500" width="11" height="11" fill="#f3f3f3" stroke="#888" strokeWidth="1.200" /><rect x="9" y="10.500" width="6.500" height="5" rx="1" fill="#e44" /><path d="M10 13H14.500" stroke="#fff" strokeWidth="1.200" /></Svg>,
};

/* ---------- data ---------- */

const menus = [["Project", 49], ["Edit", 33.5], ["View", 36.5], ["Layer", 42], ["Settings", 53.5], ["Plugins", 48.5], ["Vector", 44.5], ["Raster", 47], ["Database", 61.5], ["Web", 36], ["Processing", 66.5], ["Help", 40]];

/* numbers are grip widths, "v" and "-" are active and disabled drop arrows */
const row1 = [11.5, "blank", "open", "save", "saveAs", "composer", "manager", 14, "touch", "hand*", "panSel", "zoomIn", "zoomOut", "zoomOne", "zoomFull", "zoomSel", "zoomLayer", "zoomLast", "zoomNext", "bookNew", "book", "refresh", 13, "info", "action", "-", "select", "v", "eps", "v", "deselect", "table", "abacus", "sigma", "measure", "v", "tip", "text", "v", 15, "help"];
const row2 = [11.5, "pencils", "pencil*", "saveEdit", "cloudNew", "arc", "v", "cloudMove", "node", "trash", "cut", "copy", "paste", 13, "label", "pie", "pinOn", "pin", "tagEye", "tagMove", "tagTurn", "tagEdit", 15, "csw", 14, "python", "crescent", "undo", "v", "wkt", "poly"];
const row3 = [11.5, "curve"];

const side = [["vAdd"], ["raster"], ["feather"], ["elephant", 1], ["world", 1], ["wcs"], ["wfs", 1], ["comma"], ["virtual"], ["vNew", 1]];

const lines = ["10220.75N 961554.48E", "11843.10N 961428.51E", "13435.49N 961013.24E", "14928.99N 960316.41E", "20256.46N 955350.69E", "21433.40N 954213.27E", "22358.65N 952845.33E", "23055.10N 951351.44E", "23510.12N 945758.74E", "23635.99N 944136.19E", "23510.12N 942513.64E", "23055.10N 940920.94E", "22358.65N 935427.04E"];

const arcPoints = [[779, 436], [839.5, 407], [904.5, 390], [971, 384.5], [1037.5, 390], [1102.5, 407], [1163.5, 436], [1218, 473.5], [1265.5, 520.5], [1304, 575], [1332.5, 636.5], [1350.5, 702], [1356, 768]];

function Tools({ items }) {
  return (
    <ToolBar>
      {items.map((it, i) => {
        if (typeof it === "number") return <Handle key={i} $w={it} />;
        if (it === "v") return <ArrowSlot key={i}><Down /></ArrowSlot>;
        if (it === "-") return <ArrowSlot key={i}><Down c="#a0a0a0" /></ArrowSlot>;
        const on = it.endsWith("*");
        return <ToolButton key={i} $on={on}>{icons[on ? it.slice(0, -1) : it]}</ToolButton>;
      })}
    </ToolBar>
  );
}

function MapCanvas() {
  const third = 1 / 3;
  const land = { fill: "#0dc48d", stroke: "#10231c", strokeWidth: 3.3, strokeLinejoin: "round" };
  return (
    <svg width="1210" height="813" viewBox="468 165 1210 813">
      <g transform={`translate(1200 280) scale(${third})`} {...land}>
        <path d="M122 70L138 85L190 88L209 97V120L194 110L188 113V139L213 131L222 143L248 155L262 183Q275 195 300 198L345 206L368 223L370 238L349 265V281L361 273L391 287Q398 283 390 275L379 268Q381 260 391 263L460 325L487 340L510 346L539 380L546 407Q556 422 564 411V377L578 389H588L601 404L613 438L626 457L623 468L627 494L580 510L546 492Q525 508 500 488L514 471L499 465L483 440L450 432L325 340Q300 322 285 320L263 321L250 310L241 322L227 325L211 313L187 305L182 287L175 281H120L117 274L124 248L99 232L100 217L79 204L83 190L53 191Q49 188 49 168Q52 147 66 145H107L116 139L103 123L108 97Z" />
        <path d="M723 672Q725 666 736 666Q758 667 767 685Q762 704 733 710L722 705Z" />
        <path d="M1084 604Q1110 590 1137 590L1147 606Q1160 612 1176 599Q1195 587 1219 595L1220 601L1214 607L1231 626L1244 633L1255 670L1259 696V720L1253 731L1244 738V719L1231 717L1213 685L1161 631Z" />
        <path d="M1058 698L1068 699L1080 682L1092 678Q1108 679 1114 696L1118 718L1096 736L1098 745L1090 751L1081 748Z" />
      </g>
      <g transform={`translate(1520 150) scale(${third})`} {...land}>
        <path d="M55 25L67 45L176 235L183 239L224 243L246 261L257 287L267 348Q275 380 295 400L340 454Q355 472 365 474L391 477L440 500L490 513V25Z" />
      </g>
      <g transform={`translate(1520 620) scale(${third})`} {...land}>
        <path d="M94 171Q105 155 128 154Q155 153 169 172Q215 172 235 163Q250 158 291 120V86L303 75L322 97L336 101L354 94L367 105L371 124L404 125L406 135L433 161L438 182L480 223V585L405 538L407 523L396 514Q370 510 335 515L332 508L331 458L322 432L282 368L274 346L252 327L246 308L233 297L232 279Q220 267 201 265Q187 258 180 234L150 200Q120 170 104 177L98 186Z" />
      </g>
      <polygon points={arcPoints.map((p) => p.join(",")).join(" ")} fill="#b0640e" stroke="#1c1208" strokeWidth="1.1" />
      {arcPoints.map(([x, y], i) => (
        <path key={i} d={`M${x - 3.5} ${y - 3.5}l7 7m0 -7l-7 7`} stroke="#f01818" strokeWidth="1" fill="none" />
      ))}
    </svg>
  );
}

const Spin = () => (
  <Spinner>
    <SpinHalf><svg width="7" height="4"><path d="M0 4H7L3.500 0Z" /></svg></SpinHalf>
    <SpinHalf><svg width="7" height="4"><path d="M0 0H7L3.500 4Z" /></svg></SpinHalf>
  </Spinner>
);

export default function App() {
  return (
    <Screen>
      <GlobalStyle />
      <Main>
        <TitleBar>
          <QLogo />
          <TitleText>QGIS 2.18.4</TitleText>
          <WindowControls>
            <svg width="11" height="11"><path d="M0 5.500H10" stroke="#888" /></svg>
            <svg width="11" height="11"><path d="M.5 3.500H7.500V10.500H.5ZM2.500 3V.5H10V8.500H7.500" fill="none" stroke="#888" /></svg>
            <X s={11} c="#888" />
          </WindowControls>
        </TitleBar>
        <MenuBar>
          {menus.map(([t, w]) => <MenuItem key={t} $w={w}>{t}</MenuItem>)}
        </MenuBar>
        <Tools items={row1} />
        <Tools items={row2} />
        <Tools items={row3} />
        <Body>
          <SideBar>
            <SideDots $m="0 0 -1px 2px" />
            {side.map(([n, arrow]) => (
              <SideRow key={n}><SideIcon>{icons[n]}</SideIcon>{arrow && <ArrowSlot><Down /></ArrowSlot>}</SideRow>
            ))}
            <SideDots $m="10px 0 0 2px" />
          </SideBar>
          <Panel>
            <PanelTitle>
              <PanelDots $w={149} />
              <PanelName>Layers Panel</PanelName>
              <PanelDots $w={149} />
              <MiniButton><svg width="9" height="9"><path d="M3 3V1H8V6H6M1 3.500H6V8H1Z" fill="none" stroke="#000" strokeWidth="1.300" /></svg></MiniButton>
              <MiniButton><X s={8} c="#000" w={2} /></MiniButton>
            </PanelTitle>
            <PanelTools>
              {["brush", "group", "eye", "filter", "epsSmall"].map((n) => <PanelTool key={n}>{icons[n]}</PanelTool>)}
              <ArrowSlot><Down c="#a0a0a0" /></ArrowSlot>
              {["expand", "collapse", "remove"].map((n) => <PanelTool key={n}>{icons[n]}</PanelTool>)}
            </PanelTools>
            <Tree>
              <TreeRow>
                <Branch data-open="true" /><Check><CheckX /></Check>
                <Swatch $c="#b0640e" $b="#4a3010"><svg width="12" height="14" viewBox="0 0 12 14"><path d="M2.500 12L9 1.500" stroke="#e8623a" strokeWidth="3" /><path d="M1.500 13.500L3 11M8.500 2.500L9.500 .5" stroke="#fff" strokeWidth="2" /></svg></Swatch>
                <LayerName $active $ls={0.05}>test</LayerName>
              </TreeRow>
              <TreeRow>
                <Branch /><Check><CheckX /></Check>
                <Swatch $c="#0dc48d" $b="#0c6b4e" />
                <LayerName $ls={0.25}>wrd_province_religion_qg0</LayerName>
              </TreeRow>
            </Tree>
          </Panel>
          <MapFrame><MapCanvas /></MapFrame>
        </Body>
        <StatusBar>
          <Label $w={57}>Coordinate</Label>
          <Field $w={221} $center><FieldValue>92.934,2.875</FieldValue></Field>
          <StatusIcon $w={26}>
            <Svg s={17} vb="0 0 17 17"><path d="M2 3L8 1L14 9L12 15L8 15L3 8Z" fill="#ccc" stroke="#333" strokeWidth="1.200" /><path d="M3 3L11 12M6 2L13 10M1 8L8 8M9 5L15 1M11 9A3 3 0 1 0 12 14M4 6L9 3" stroke="#333" /></Svg>
          </StatusIcon>
          <Label $w={37} $pl={8}>Scale</Label>
          <Field $w={88} $pl={4}><FieldValue $grow>1:1,675,123</FieldValue><ComboArrow><Down /></ComboArrow></Field>
          <StatusIcon $w={28}>
            <Svg w={14} h={17} vb="0 0 14 17"><path d="M3.500 9V5A3.500 3.500 0 0 1 10.500 5V9" stroke="#999" strokeWidth="2" /><rect x="1" y="8" width="12" height="8" rx="1.500" fill="#666" /></Svg>
          </StatusIcon>
          <Label $w={55} $pl={7}>Magnifier</Label>
          <Field $w={77} $h={21} $pl={4}><FieldValue $grow>100%</FieldValue><Spin /></Field>
          <Label $w={59} $pl={8}>Rotation</Label>
          <Field $w={77} $h={21} $pl={4}><FieldValue $grow>0.0</FieldValue><Spin /></Field>
          <StatusIcon $w={24}><Check><CheckX /></Check></StatusIcon>
          <Label $w={52}>Render</Label>
          <Svg s={16} vb="0 0 16 16"><circle cx="8" cy="8" r="6.800" fill="#d4d4d4" stroke="#888" /><path d="M0 8H16M8 0V16" stroke="#888" /><ellipse cx="8" cy="8" rx="3.500" ry="6.800" stroke="#888" /><path d="M2.500 4.500H13.500M2.500 11.500H13.500" stroke="#999" /></Svg>
          <Label $w={80} $pl={4}>EPSG:4326</Label>
          <Svg w={17} h={15} vb="0 0 17 15"><path d="M8 .5C13 .5 16.500 3 16.500 6.200Q16.500 9 14 10.500L15 14.500L10.500 11.500C5 12.500 .5 10 .5 6.200S4 .5 8 .5Z" fill="#5c5c5c" /><path d="M4 6H6M7.500 6H9.500M11 6H13" stroke="#fff" strokeWidth="2" /></Svg>
        </StatusBar>
        <TaskStrip><TaskActive /></TaskStrip>
      </Main>
      <Edge>
        <EdgeTop>
          <svg width="6" height="32"><rect x=".5" y="1" width="8" height="14" fill="#fff" stroke="#445" /><path d="M2 6H6M2 8H6" stroke="#cde" /><path d="M2 10H6V14H2Z" fill="#3a3" /><rect x="5" y="25" width="1" height="6" fill="#ee6" /></svg>
        </EdgeTop>
        <EdgeBar><EdgeBox /></EdgeBar>
        <EdgeTab><EdgeBlue /></EdgeTab>
        <EdgeBody />
      </Edge>
      <Upload>
        <UploadLogo>
          <svg width="21" height="18" viewBox="0 0 21 18" fill="none" stroke="#fff" strokeWidth="2.600"><circle cx="10.500" cy="5" r="3.700" /><circle cx="5" cy="11.500" r="3.600" /><path d="M10.500 9L14 13.500A3.500 3.500 0 1 0 13 9.500" /></svg>
        </UploadLogo>
        <UploadText>拖拽上传</UploadText>
      </Upload>
      <Dialog>
        <DialogTitle>
          <QLogo s={15} />
          <DialogName>Generating polygon from text Tool</DialogName>
          <HelpMark>?</HelpMark>
          <X s={11} c="#000" />
        </DialogTitle>
        <TabRow><Tab>Draw</Tab></TabRow>
        <TabPage>
          <TextArea>{lines.map((l) => <TextLine key={l}>{l}</TextLine>)}</TextArea>
          <ButtonRow>
            <PushButton>Clear</PushButton>
            <PushButton $default>Draw</PushButton>
            <PushButton $right>Close</PushButton>
          </ButtonRow>
        </TabPage>
      </Dialog>
    </Screen>
  );
}
